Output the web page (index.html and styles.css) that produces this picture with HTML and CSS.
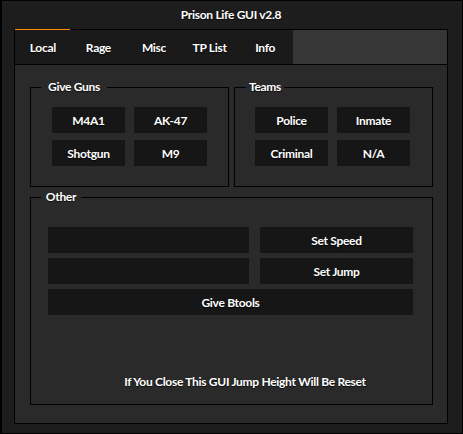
FILE: index.html
```html
<!DOCTYPE html>
<html>
<head>
<meta charset="utf-8">
<link rel="stylesheet" href="styles.css">
</head>
<body>
<div class="window">
  <div class="title">Prison Life GUI v2.8</div>
  <div class="panel">
    <div class="tabs">
      <div class="tab active">Local</div>
      <div class="tab">Rage</div>
      <div class="tab">Misc</div>
      <div class="tab">TP List</div>
      <div class="tab">Info</div>
      <div class="tab-fill"></div>
    </div>
    <div class="content">
      <div class="top-row">
        <section class="group guns">
          <span class="legend legend-guns">Give Guns</span>
          <div class="btn-grid">
            <button class="btn">M4A1</button>
            <button class="btn">AK-47</button>
            <button class="btn">Shotgun</button>
            <button class="btn">M9</button>
          </div>
        </section>
        <section class="group teams">
          <span class="legend legend-teams">Teams</span>
          <div class="btn-grid">
            <button class="btn">Police</button>
            <button class="btn">Inmate</button>
            <button class="btn">Criminal</button>
            <button class="btn">N/A</button>
          </div>
        </section>
      </div>
      <section class="group other">
        <span class="legend legend-other">Other</span>
        <div class="other-grid">
          <div class="field"></div>
          <button class="btn">Set Speed</button>
          <div class="field"></div>
          <button class="btn">Set Jump</button>
          <button class="btn wide">Give Btools</button>
        </div>
        <p class="note">If You Close This GUI Jump Height Will Be Reset</p>
      </section>
    </div>
  </div>
</div>
</body>
</html>
```

FILE: styles.css
```css
* { box-sizing: border-box; }
html, body { margin: 0; padding: 0; background: #1c1c1c; }
body {
  font-family: "Lato", "Noto Sans", sans-serif;
  font-weight: 700;
  font-size: 12px;
  letter-spacing: -0.3px;
  color: #ffffff;
}
.window {
  width: 463px;
  height: 434px;
  background: #1d1d1d;
  border: 1px solid #000;
  border-left-width: 2px;
  padding: 0 14px 9px 12px;
  display: flex;
  flex-direction: column;
}
.title {
  height: 28px;
  line-height: 28px;
  text-align: center;
  text-shadow: 0 1px 1px rgba(0,0,0,.7);
}
.panel {
  flex: 1;
  display: flex;
  flex-direction: column;
}
.tabs {
  height: 36px;
  border: 1px solid #000;
  background: #1a1a1a;
  display: flex;
}
.tab {
  width: 55.6px;
  flex: none;
  position: relative;
  text-align: center;
  line-height: 36px;
  text-shadow: 0 1px 1px rgba(0,0,0,.7);
}
.tab.active::before {
  content: "";
  position: absolute;
  left: 0;
  top: -1px;
  width: 55px;
  height: 1px;
  background: #ff8c00;
}
.tab-fill {
  flex: 1;
  background: #363636;
}
.content {
  flex: 1;
  background: #2a2a2a;
  border: 1px solid #000;
  border-top: 0;
  padding: 22px 14px 18px 15px;
  display: flex;
  flex-direction: column;
}
.top-row {
  display: flex;
  gap: 5px;
  height: 100px;
}
.group {
  position: relative;
  border: 1px solid #000;
}
.guns, .teams { width: 199px; }
.other {
  margin-top: 10px;
  height: 208px;
  display: flex;
  flex-direction: column;
}
.legend {
  position: absolute;
  top: -9px;
  height: 16px;
  line-height: 16px;
  text-align: center;
  background: #2a2a2a;
  text-shadow: 0 1px 1px rgba(0,0,0,.7);
}
.legend-guns { left: 10px; width: 66px; }
.legend-teams { left: 11px; width: 38px; }
.legend-other { left: 10px; width: 40px; }
.btn-grid {
  display: grid;
  grid-template-columns: 73px 73px;
  grid-auto-rows: 26px;
  column-gap: 9px;
  row-gap: 7px;
  padding-top: 19px;
  padding-left: 21px;
}
.teams .btn-grid { padding-left: 20px; }
.btn {
  border: 0;
  margin: 0;
  padding: 0;
  background: #161616;
  color: #fff;
  font: inherit;
  letter-spacing: inherit;
  text-align: center;
  text-shadow: 0 1px 1px rgba(0,0,0,.7);
}
.other-grid {
  display: grid;
  grid-template-columns: 201px 153px;
  grid-auto-rows: 26px;
  column-gap: 11px;
  row-gap: 5px;
  padding-top: 29px;
  padding-left: 17px;
}
.field { background: #161616; }
.wide { grid-column: 1 / -1; }
.note {
  margin: auto 0 0 0;
  padding: 0 0 14px 27px;
  line-height: 16px;
  text-align: center;
  text-shadow: 0 1px 1px rgba(0,0,0,.7);
}
```
